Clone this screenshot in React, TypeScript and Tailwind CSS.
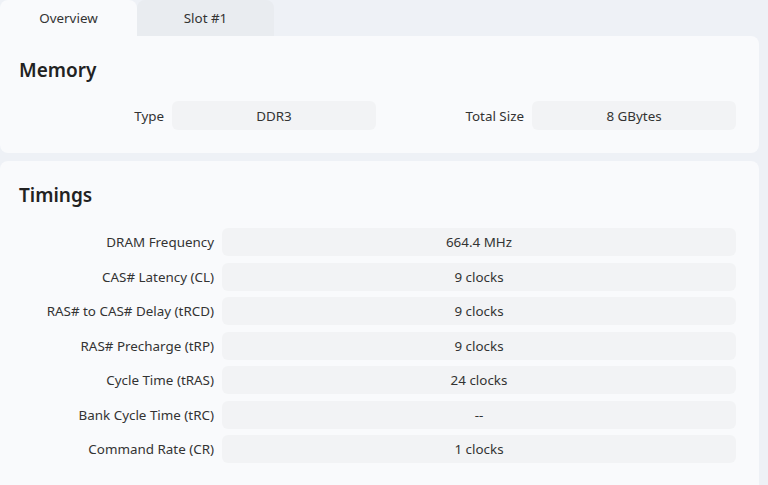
const memory = [
  { label: "Type", value: "DDR3" },
  { label: "Total Size", value: "8 GBytes" },
];

const timings = [
  { label: "DRAM Frequency", value: "664.4 MHz" },
  { label: "CAS# Latency (CL)", value: "9 clocks" },
  { label: "RAS# to CAS# Delay (tRCD)", value: "9 clocks" },
  { label: "RAS# Precharge (tRP)", value: "9 clocks" },
  { label: "Cycle Time (tRAS)", value: "24 clocks" },
  { label: "Bank Cycle Time (tRC)", value: "--" },
  { label: "Command Rate (CR)", value: "1 clocks" },
];

export default function App() {
  return (
    <div
      className="h-[485px] w-[768px] overflow-hidden bg-[#eef1f6] pr-[9px] text-[13.4px] text-[#333]"
      style={{ fontFamily: '"Noto Sans", "Open Sans", sans-serif' }}
    >
      {/* tabs */}
      <div className="flex h-[36px] items-stretch">
        <div className="flex w-[137px] items-center justify-center rounded-t-lg bg-[#f9fafc] pt-px">
          Overview
        </div>
        <div className="flex w-[137px] items-center justify-center rounded-t-lg bg-[#e9ecf0] pt-px">
          Slot #1
        </div>
      </div>

      <section className="h-[117px] rounded-b-lg rounded-tr-lg bg-[#f9fafc] pt-[22px]">
        <h2 className="pl-[19px] text-[19px] font-semibold leading-[24px] text-[#222]">Memory</h2>
        <div className="mt-[19px] flex pl-[16px]">
          {memory.map((m) => (
            <div key={m.label} className="flex items-center gap-2">
              <span className="w-[148px] pt-px text-right">{m.label}</span>
              <div className="flex h-[29px] w-[204px] items-center justify-center rounded-md bg-[#f2f3f5] pt-px">
                {m.value}
              </div>
            </div>
          ))}
        </div>
      </section>

      <section className="mt-[8px] h-[330px] rounded-t-lg bg-[#f9fafc] pt-[22px]">
        <h2 className="pl-[19px] text-[19px] font-semibold leading-[24px] text-[#222]">Timings</h2>
        <div className="mt-[21px] flex flex-col gap-[6.5px] pl-[16px]">
          {timings.map((t) => (
            <div key={t.label} className="flex items-center gap-2">
              <span className="w-[198px] pt-px text-right">{t.label}</span>
              <div className="flex h-[28px] w-[514px] items-center justify-center rounded-md bg-[#f2f3f5] pt-px">
                {t.value}
              </div>
            </div>
          ))}
        </div>
      </section>
    </div>
  );
}
